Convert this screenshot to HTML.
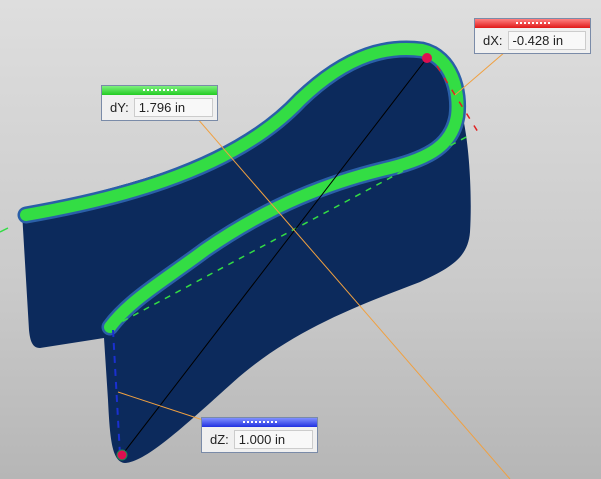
<!DOCTYPE html>
<html><head><style>
body{margin:0;width:601px;height:479px;overflow:hidden;font-family:"Liberation Sans",sans-serif;background:linear-gradient(180deg,#dedede 0%,#cacaca 60%,#b6b6b6 100%);position:relative}
.box{position:absolute;background:#f0f0f0;border:1px solid #7a8ba8;box-sizing:border-box}
.box .h{height:9px;position:relative;overflow:hidden}
.box .h:after{content:"";position:absolute;left:41px;width:34px;top:3px;border-top:2px dotted #fff}
.box .r{display:flex;align-items:center;height:24px;font-size:13px;color:#222;padding-left:8px}
.box .v{background:#f8f8f8;border:1px solid #ccc;margin-left:5px;height:17px;line-height:17px;padding-left:4px;flex:1;margin-right:4px}
</style></head><body>
<svg width="601" height="479" style="position:absolute;left:0;top:0">
<path d="M22,212 C120,185 250,160 310,85 C350,45 390,40 425,45 C455,52 465,90 463,118 C470,150 472,200 470,232 C468,258 450,268 420,282 C360,305 290,330 230,385 C180,430 145,462 125,463 C112,462 110,440 108,400 L104,338 L40,348 C32,348 30,340 29,330 Z" fill="#0c2a5c"/>
<path d="M26,215 C100,202 230,175 300,100 C350,52 390,46 422,50 C452,57 460,92 457,116 C452,145 430,158 390,168 C330,182 270,205 205,250 C165,280 130,300 110,327" fill="none" stroke="#2a5fa8" stroke-width="17" stroke-linecap="round"/>
<path d="M26,215 C100,202 230,175 300,100 C350,52 390,46 422,50 C452,57 460,92 457,116 C452,145 430,158 390,168 C330,182 270,205 205,250 C165,280 130,300 110,327" fill="none" stroke="#33dd44" stroke-width="12" stroke-linecap="round"/>
<path d="M112,327 L470,135" stroke="#33dd44" stroke-width="1.5" stroke-dasharray="6,6" fill="none"/>
<path d="M0,232 L8,228" stroke="#33dd44" stroke-width="1.5"/>
<path d="M437,66 L478,132" stroke="#e02020" stroke-width="1.5" stroke-dasharray="6,8" fill="none"/>
<path d="M113,330 L120,455" stroke="#1a30d0" stroke-width="2" stroke-dasharray="7,6" fill="none"/>
<path d="M427,58 L122,455" stroke="#000" stroke-width="1"/>
<path d="M190,110 L510,479" stroke="#f0a040" stroke-width="1"/>
<path d="M455,95 L505,52" stroke="#f0a040" stroke-width="1"/>
<path d="M118,392 L203,420" stroke="#f0a040" stroke-width="1"/>
<circle cx="427" cy="58" r="5" fill="#dd1050"/>
<circle cx="122" cy="455" r="5" fill="#dd1050" stroke="#1a8a50" stroke-width="1"/>
</svg>
<div class="box" style="left:101px;top:85px;width:117px;height:36px"><div class="h" style="background:linear-gradient(#7ef07e,#22cc22)"></div><div class="r">dY:<div class="v">1.796 in</div></div></div>
<div class="box" style="left:474px;top:18px;width:117px;height:36px"><div class="h" style="background:linear-gradient(#ff8080,#e01818)"></div><div class="r">dX:<div class="v">-0.428 in</div></div></div>
<div class="box" style="left:201px;top:417px;width:117px;height:36px"><div class="h" style="background:linear-gradient(#8090ff,#2030e0)"></div><div class="r">dZ:<div class="v">1.000 in</div></div></div>
</body></html>
